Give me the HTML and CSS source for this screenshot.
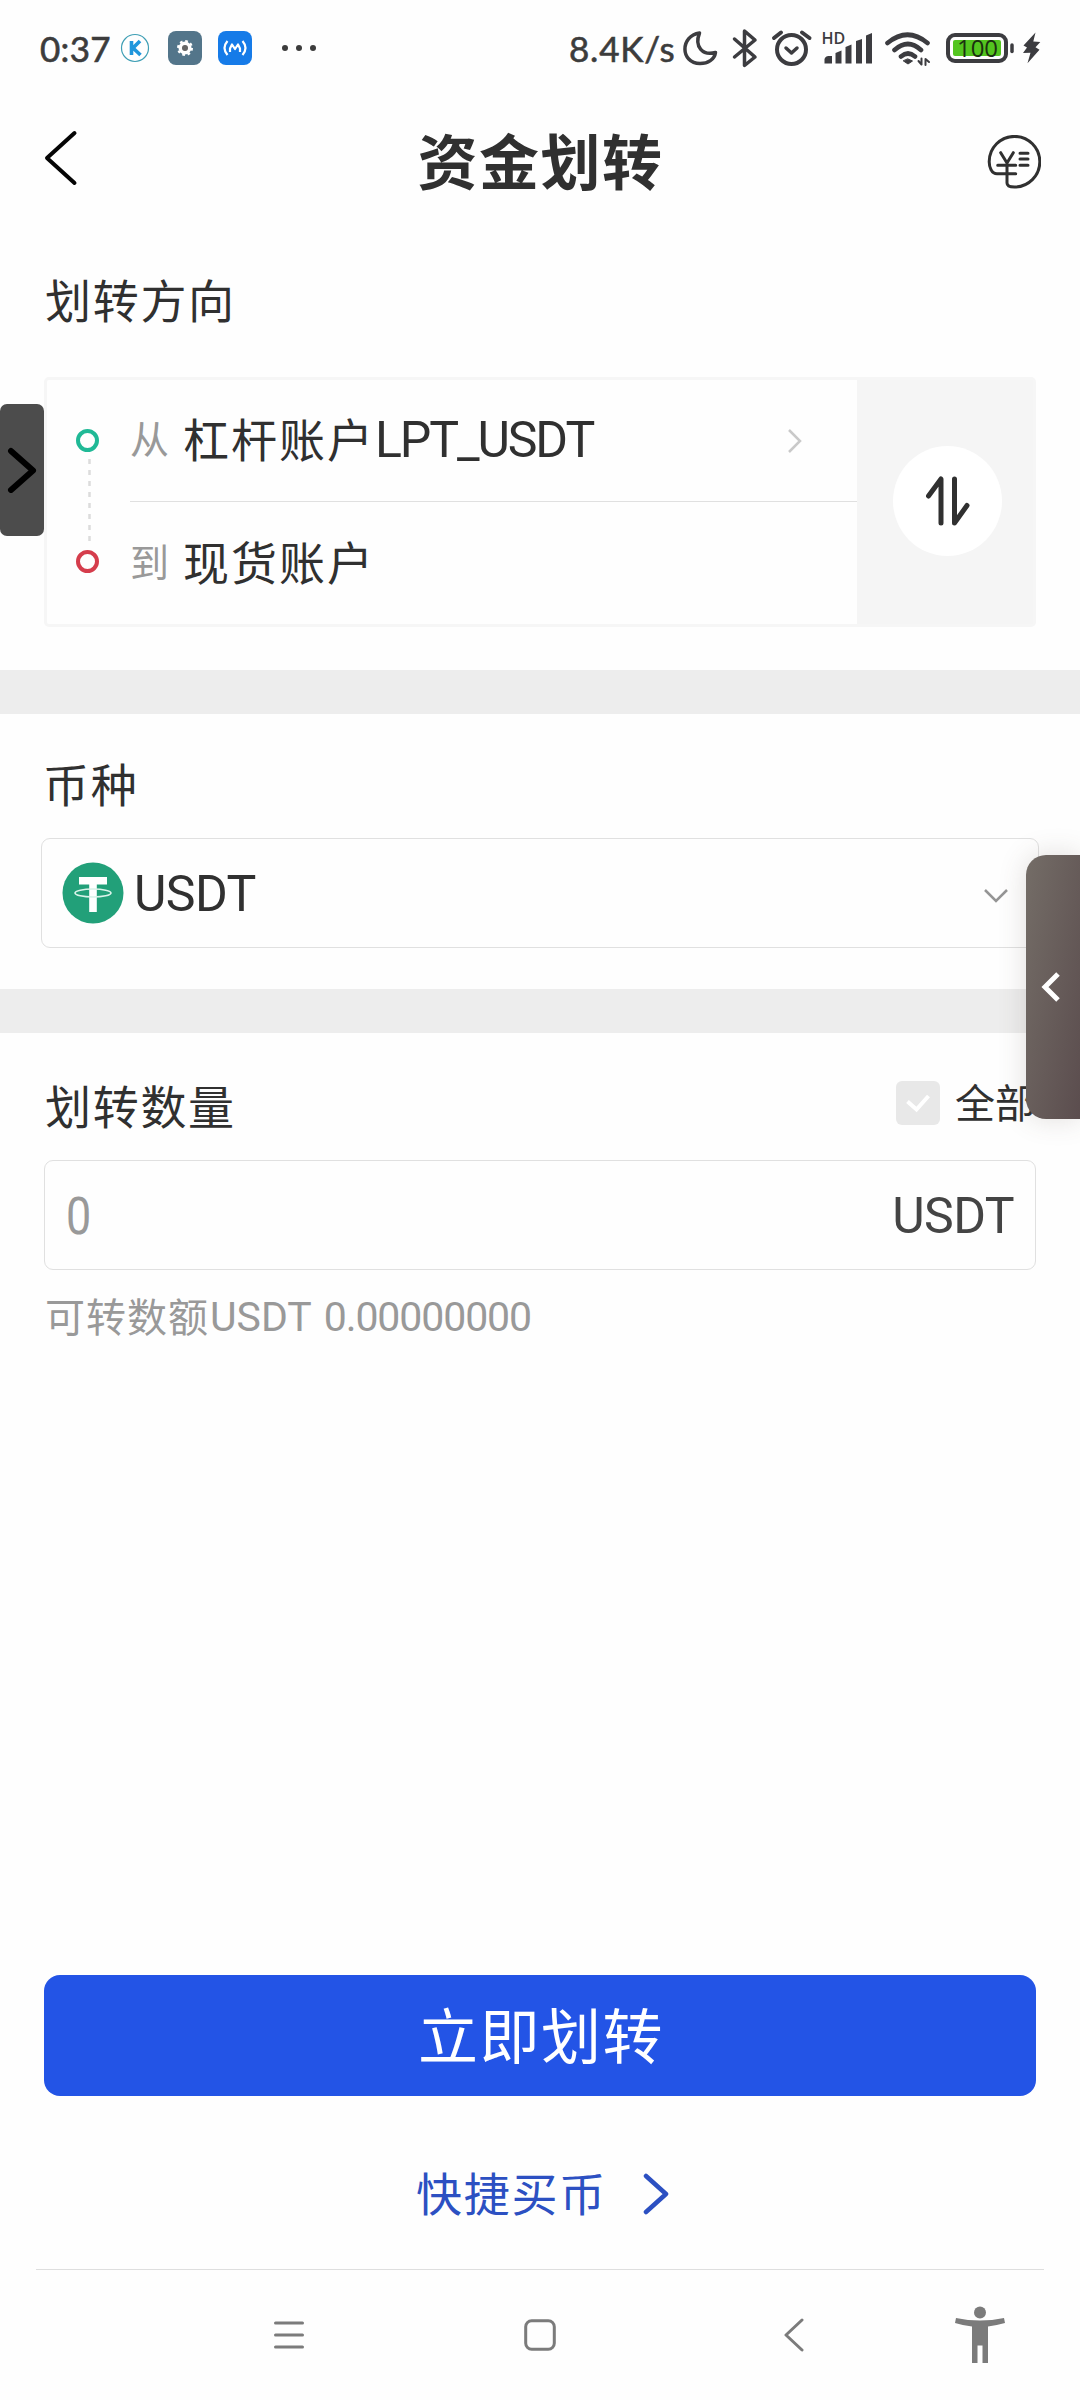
FILE: index.html
```html
<!DOCTYPE html>
<html lang="zh-CN">
<head>
<meta charset="utf-8">
<title>资金划转</title>
<link rel="stylesheet" href="styles.css">
</head>
<body>
<div class="screen">
  <header class="status">
    <span class="clock">0:37</span>
    <svg class="ic-k" width="30" height="30" viewBox="0 0 30 30"><circle cx="15" cy="15" r="13.5" fill="none" stroke="#3f9fb5" stroke-width="1.2"/><path d="M11.500 8v14M20 8l-7 7 7.500 7" fill="none" stroke="#1f96dc" stroke-width="3.600"/></svg>
    <svg class="ic-gear" width="34" height="34" viewBox="0 0 34 34"><rect width="34" height="34" rx="8" fill="#53758a"/><circle cx="17" cy="17" r="4.500" fill="none" stroke="#fff" stroke-width="4"/><circle cx="17" cy="17" r="7" fill="none" stroke="#fff" stroke-width="2" stroke-dasharray="2.750 2.750"/><circle cx="17" cy="17" r="3" fill="#666"/></svg>
    <svg class="ic-m" width="34" height="34" viewBox="0 0 34 34"><rect width="34" height="34" rx="8" fill="#167be8"/><path d="M9.500 10q-6 7 0 14M24.500 10q6 7 0 14M12 21v-3.500l2-4 3 4.500 3-4.500 2 4V21" fill="none" stroke="#fff" stroke-width="2.200" stroke-linejoin="round"/></svg>
    <svg class="ic-dots" width="34" height="6" viewBox="0 0 34 6" fill="#3c3c3c"><circle cx="3" cy="3" r="3"/><circle cx="17" cy="3" r="3"/><circle cx="31" cy="3" r="3"/></svg>
    <span class="speed">8.4K/s</span>
    <svg class="ic-sys" width="366" height="44" viewBox="678 26 366 44" fill="none" stroke="#3c3c40" stroke-width="3.500" stroke-linecap="round" stroke-linejoin="round">
      <path d="M699.500 33C680 36 680 63 700 63.500c8 0 14.500-4 15.500-11C703 56 694 47 699.500 33Z"/>
      <path d="M734.500 39 755 57l-10.500 8.500V31L755 40 734.500 57"/>
      <circle cx="791.500" cy="49.500" r="14.500" stroke-width="4"/><path d="m786 48 5.500 5 5.500-5"/><path d="M774 38l7-5.500M802 32.500l7.500 5.500" stroke-width="4"/>
      <g fill="#3c3c40" stroke="none"><path d="M824.500 63.500V59q1-3 4-3h3.500v7.500zM835.500 63.500V53l6-2.500v13zM845.500 63.500V47l6-2.500v19zM856 63.500V41l6-2v24.500zM866 63.500V35.500l6-2.500v30.500z"/></g>
      <path d="M887.500 43q20-16.500 40 0M894.500 50q13.500-12 26.500 0M901 56.500q7-6 14 0" stroke-width="4.600"/><path d="m903.500 61 4.500 3 4.500-3-4.500-2z" fill="#3c3c40" stroke-width="1"/><path d="M918.500 61l3 3.500v-6M925.500 65V59l3.500 3" stroke-width="2"/>
      <rect x="948" y="35" width="58" height="26" rx="7" stroke-width="4"/><rect x="953" y="40" width="48" height="16" rx="2" fill="#53c51f" stroke="none"/><path d="M1012 45v6.500"/>
      <path d="m1035.500 32.500-12 13 3.500 2-4 5.500 7.500-.3-3 10.500 12-13.500-4-2.500 4.800-5.200-7-.5z" fill="#3c3c40" stroke="none"/>
      <text class="hd" x="821.500" y="44">HD</text><text class="pct" x="977.500" y="56.500" text-anchor="middle">100</text>
    </svg>
  </header>

  <nav class="titlebar">
    <svg class="back" width="34" height="56" viewBox="0 0 34 56"><path d="M30.500 3 3 28l27.500 25" fill="none" stroke="#050505" stroke-width="4" stroke-linecap="round" stroke-linejoin="round"/></svg>
    <h1>资金划转</h1>
    <svg width="54" height="54" viewBox="0 0 54 54" fill="none" stroke="#303030" stroke-width="3" stroke-linecap="round" stroke-linejoin="round"><path d="M28.700 38.700H10C4.500 38.700 2.200 32 2.200 26.700A25.300 25.300 0 1 1 27.500 52C22 52 20 50.500 20 48V28M13.700 17.700 20 28l6.300-10.300M10.700 30.300h18M33 18.300h8M33 23.900h8M33 30.300h8"/></svg>
  </nav>

  <section class="direction">
    <h2>划转方向</h2>
    <div class="route">
      <div class="route-marks">
        <i class="ring ring-from"></i>
        <svg width="3" height="84" viewBox="0 0 3 84"><path d="M1.500 0v84" stroke="#dcdcdc" stroke-width="2.500" stroke-dasharray="5 6"/></svg>
        <i class="ring ring-to"></i>
      </div>
      <div class="route-rows">
        <div class="route-row route-first"><span class="lead">从</span><span class="account">杠杆账户<span class="latin pair">LPT_USDT</span></span>
          <svg width="15" height="26" viewBox="0 0 15 26"><path d="m2 2 11 11L2 24" fill="none" stroke="#c9c9c9" stroke-width="2.500"/></svg></div>
        <div class="route-row"><span class="lead">到</span><span class="account">现货账户</span></div>
      </div>
      <div class="swap"><div class="swap-btn"><svg width="44" height="50" viewBox="0 0 44 50"><path d="M2.500 20 15 3v44M28.500 3v44L41 29.500" fill="none" stroke="#303030" stroke-width="5" stroke-linecap="round" stroke-linejoin="round"/></svg></div></div>
    </div>
  </section>

  <div class="band"></div>

  <section class="coin">
    <h2>币种</h2>
    <div class="select">
      <svg width="62" height="62" viewBox="0 0 62 62"><circle cx="31" cy="31" r="30.500" fill="#22a079"/><path d="M17 15h28v7.500h-10.200V50h-7.600V22.500H17z" fill="#fff"/><ellipse cx="31" cy="31" rx="18" ry="4" fill="none" stroke="#d9f3e9" stroke-width="1.600"/></svg>
      <span class="latin">USDT</span>
      <svg class="down" width="26" height="16" viewBox="0 0 26 16"><path d="m2 2 11 11L24 2" fill="none" stroke="#959595" stroke-width="2.500"/></svg>
    </div>
  </section>

  <div class="band"></div>

  <section class="amount">
    <div class="amount-head">
      <h2>划转数量</h2>
      <span class="check"><svg width="26" height="20" viewBox="0 0 26 20"><path d="m2.500 8.500 9 8L23.500 3" fill="none" stroke="#fff" stroke-width="4"/></svg></span>
      <span class="all">全部</span>
    </div>
    <div class="field"><span class="zero">0</span><span class="unit latin">USDT</span></div>
    <p class="hint">可转数额<span class="hint-latin">USDT</span><span class="hint-num">0.00000000</span></p>
  </section>

  <footer class="actions">
    <div class="submit">立即划转</div>
    <div class="buy"><span>快捷买币</span><svg width="28" height="42" viewBox="0 0 28 42"><path d="m4 3 20 18L4 39" fill="none" stroke="#2c50c2" stroke-width="4.500" stroke-linecap="round" stroke-linejoin="round"/></svg></div>
  </footer>

  <div class="sysnav">
    <svg class="nav-menu" width="30" height="30" viewBox="0 0 30 30"><path d="M1.500 3h27M1.500 15h27M1.500 27h27" stroke="#7b7b7b" stroke-width="3" stroke-linecap="round"/></svg>
    <svg class="nav-home" width="32" height="32" viewBox="0 0 32 32"><rect x="1.700" y="1.700" width="28.600" height="28.600" rx="6" fill="none" stroke="#7b7b7b" stroke-width="3"/></svg>
    <svg class="nav-back" width="22" height="34" viewBox="0 0 22 34"><path d="M19 2 3 17l16 15" fill="none" stroke="#7b7b7b" stroke-width="3" stroke-linecap="round" stroke-linejoin="round"/></svg>
    <svg class="nav-access" width="50" height="58" viewBox="0 0 50 58" fill="#7b7b7b"><circle cx="25" cy="6.500" r="6"/><path d="M1 12q24 5 48 0l1 5q-9 2.500-17 3.500V57h-5.500V39.500h-5V57H17V20.500Q8 19.500 0 17z"/></svg>
  </div>

  <div class="tab-left"><svg width="30" height="46" viewBox="0 0 30 46"><path d="m4 4 22 19.500L4 43" fill="none" stroke="#000" stroke-width="6" stroke-linecap="round" stroke-linejoin="round"/></svg></div>
  <div class="tab-right"><svg width="20" height="32" viewBox="0 0 20 32"><path d="M17 3 4 16l13 13" fill="none" stroke="#fff" stroke-width="5"/></svg></div>
</div>
</body>
</html>
```
FILE: styles.css
```css
* { box-sizing: border-box; }
body { margin: 0; background: #fefefe; }
svg { display: block; flex: none; }
h1, h2, p { margin: 0; }

.screen {
  position: relative;
  width: 1080px;
  height: 2400px;
  overflow: hidden;
  display: flex;
  flex-direction: column;
  background: #fefefe;
  color: #303030;
  font-family: "Noto Sans CJK SC", sans-serif;
}
.latin { font-family: Roboto, sans-serif; font-size: 50px; letter-spacing: -0.6px; }
.pair { letter-spacing: -2.1px; }

/* status bar */
.status { height: 96px; display: flex; align-items: center; padding-left: 40px; color: #3c3c3c; }
.clock, .speed { font-family: Lato, sans-serif; font-size: 35px; line-height: 40px; white-space: nowrap; -webkit-text-stroke: .6px #3c3c3c; }
.clock { width: 80px; letter-spacing: .3px; }
.ic-gear { margin-left: 18px; }
.ic-m { margin-left: 16px; }
.ic-dots { margin-left: 30px; }
.speed { margin-left: 253px; width: 109px; letter-spacing: .8px; }
.hd, .pct { stroke: none; fill: #3c3c40; font-family: "Open Sans", sans-serif; font-weight: 600; font-size: 16px; }
.pct { font-size: 24px; font-weight: 400; fill: #1b3010; }

/* title bar */
.titlebar { height: 160px; display: flex; align-items: center; justify-content: space-between; padding: 0 39px 28px 44px; }
.titlebar h1 { margin-left: 16px; padding-bottom: 7px; font-size: 60px; line-height: 80px; font-weight: 700; letter-spacing: 1.5px; }
.back { margin-bottom: 9px; }

h2 { font-size: 46px; line-height: 60px; font-weight: 400; letter-spacing: 1.7px; }

/* direction */
.direction { height: 414px; padding: 12px 44px 0; }
.direction h2 { padding-left: 1px; }
.route { margin-top: 49px; height: 250px; border: 3px solid #f6f6f6; border-radius: 5px; display: flex; }
.route-marks { width: 83px; padding: 49px 0 0 29px; display: flex; flex-direction: column; gap: 7px; }
.route-marks svg { margin-left: 12px; }
.ring { width: 23px; height: 23px; border: 4px solid #20b996; border-radius: 50%; }
.ring-to { border-color: #d53d4c; }
.route-rows { flex: 1; }
.route-row { height: 122px; display: flex; align-items: center; }
.route-first { border-bottom: 1px solid #e0e0e0; }
.lead { width: 53px; padding-bottom: 7px; font-size: 39px; color: #999; }
.account { flex: 1; padding-bottom: 7px; font-size: 46px; letter-spacing: 2px; white-space: nowrap; }
.route-row svg { margin-right: 55px; }
.swap { width: 176px; background: #f5f5f5; display: flex; align-items: center; justify-content: center; }
.swap-btn { width: 109px; height: 110px; border-radius: 50%; background: #fff; display: flex; align-items: center; justify-content: center; margin: 0 0 2px 5px; }

.band { height: 44px; background: #ededed; }

/* coin */
.coin { height: 275px; padding: 38px 41px 0; }
.coin h2 { padding-left: 2px; }
.select { margin-top: 26px; height: 110px; border: 1px solid #e0e0e0; border-radius: 9px; display: flex; align-items: center; padding: 0 29px 0 20px; }
.select > svg:first-child { margin-bottom: 1px; }
.select .latin { margin-left: 10px; padding-top: 2px; }
.down { margin: 5px 0 0 auto; }

/* amount */
.amount { height: 930px; padding: 40px 44px 0; }
.amount-head { display: flex; align-items: center; height: 61px; }
.amount-head h2 { flex: 1; padding-left: 1px; }
.check { width: 44px; height: 44px; border-radius: 6px; background: #e8e8e8; display: flex; align-items: center; justify-content: center; margin-bottom: 2px; }
.all { margin-left: 15px; width: 81px; padding-bottom: 6px; font-size: 40px; white-space: nowrap; }
.field { margin-top: 26px; height: 110px; border: 1px solid #e0e0e0; border-radius: 9px; display: flex; align-items: center; justify-content: space-between; padding: 2px 21px 0; }
.zero { font-family: Roboto, sans-serif; font-size: 51px; color: #999; transform: scaleX(.88); transform-origin: left; }
.unit { color: #444; }
.hint { margin-top: 15px; padding-left: 1px; height: 60px; display: flex; align-items: center; font-size: 40px; letter-spacing: 1px; color: #999; }
.hint-latin, .hint-num { padding-top: 4px; font-family: Roboto, sans-serif; font-size: 41px; letter-spacing: 0; }
.hint-latin { margin-left: 1px; }
.hint-num { margin-left: 12px; letter-spacing: -1.1px; }

/* actions */
.actions { height: 307px; margin: 0 36px; padding: 12px 8px 0; border-bottom: 1px solid #dedede; }
.submit { height: 121px; padding: 0 0 7px 2px; border-radius: 16px; background: #2354e6; color: #fff; font-size: 60px; letter-spacing: 1.5px; display: flex; align-items: center; justify-content: center; }
.buy { height: 60px; margin-top: 68px; padding-left: 6px; display: flex; align-items: center; justify-content: center; color: #2c50c2; font-size: 46px; letter-spacing: 1.7px; gap: 35px; }
.buy span { padding-bottom: 7px; }

/* system navigation */
.sysnav { flex: 1; display: flex; align-items: center; padding: 0 0 1px 274px; }
.nav-home { margin-left: 220px; }
.nav-back { margin-left: 227px; }
.nav-access { margin-left: 150px; }

/* floating side handles */
.tab-left { position: absolute; left: 0; top: 404px; width: 44px; height: 132px; border-radius: 7px; background: #4c4c4c; display: flex; align-items: center; padding-left: 7px; }
.tab-right { position: absolute; left: 1026px; top: 855px; width: 54px; height: 264px; border-radius: 20px 0 0 20px; background: linear-gradient(100deg, #746d67, #5b4d4e); box-shadow: 0 0 28px rgba(90, 70, 60, .18); display: flex; align-items: center; padding-left: 15px; }
```
